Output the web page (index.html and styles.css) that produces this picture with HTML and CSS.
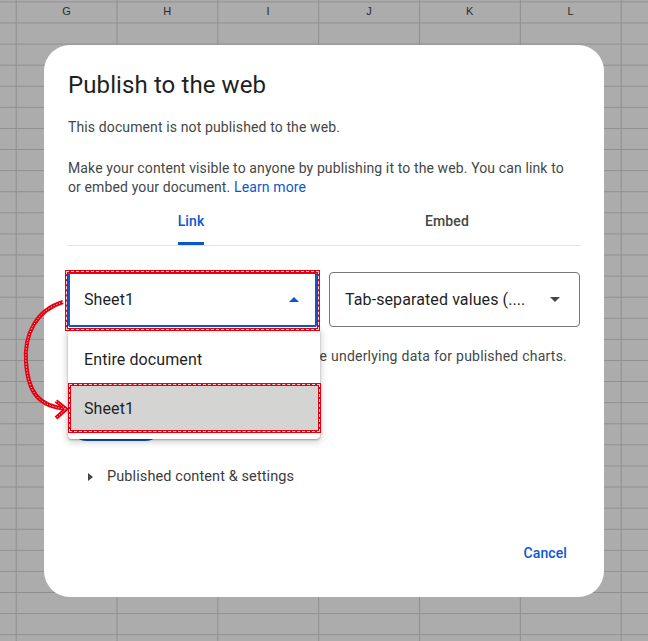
FILE: index.html
```html
<!DOCTYPE html>
<html lang="en">
<head>
<meta charset="utf-8">
<title>Publish to the web</title>
<link rel="stylesheet" href="styles.css">
</head>
<body>
  <div class="col-header">
    <div class="corner"></div>
    <div class="col">G</div>
    <div class="col">H</div>
    <div class="col">I</div>
    <div class="col">J</div>
    <div class="col">K</div>
    <div class="col">L</div>
  </div>

  <div class="dialog">
    <h1 class="title">Publish to the web</h1>
    <p class="status">This document is not published to the web.</p>
    <p class="intro">Make your content visible to anyone by publishing it to the web. You can link to or embed your document. <a class="link" href="#">Learn more</a></p>

    <div class="tabs">
      <div class="tab-list">
        <div class="tab tab-active"><span class="tab-label">Link</span></div>
        <div class="tab"><span class="tab-label">Embed</span></div>
      </div>
    </div>

    <div class="selects">
      <div class="select select-open">
        <span class="select-text">Sheet1</span>
        <svg class="caret" width="10" height="5" viewBox="0 0 10 5"><path d="M0 5 L5 0 L10 5 Z" fill="#0b57d0"/></svg>
        <span class="mark"></span>
        <div class="menu">
          <div class="menu-item menu-item-first">Entire document</div>
          <div class="menu-item menu-item-selected">Sheet1<span class="mark mark-inset"></span></div>
        </div>
      </div>
      <div class="select">
        <span class="select-text">Tab-separated values (....</span>
        <svg class="caret" width="10" height="5" viewBox="0 0 10 5"><path d="M0 0 L5 5 L10 0 Z" fill="#444746"/></svg>
      </div>
    </div>

    <p class="caption">Anyone with the link will also access the underlying data for published charts.</p>

    <button class="publish">Publish</button>

    <div class="disclosure">
      <svg class="disclosure-icon" width="5" height="8" viewBox="0 0 5 8"><path d="M0 0 L5 4 L0 8 Z" fill="#444746"/></svg>
      <span>Published content &amp; settings</span>
    </div>

    <div class="footer">
      <button class="text-btn">Cancel</button>
    </div>
  </div>

  <svg class="annot" width="120" height="450" viewBox="0 0 120 450">
    <g fill="none" stroke-linecap="butt">
      <path d="M63 302 C 36 310 24 335 26 362 C 28 392 38 406 66 409" stroke="#e3000f" stroke-width="4"/>
      <path d="M56 401 L66 409 L56 418" stroke="#e3000f" stroke-width="4"/>
      <path d="M63 302 C 36 310 24 335 26 362 C 28 392 38 406 66 409" stroke="#ffffff" stroke-width="1" stroke-dasharray="1 2"/>
      <path d="M56 401 L66 409 L56 418" stroke="#ffffff" stroke-width="1" stroke-dasharray="1 2"/>
    </g>
  </svg>
</body>
</html>
```

FILE: styles.css
```css
html {
  background-color: #acacac;
  background-image:
    linear-gradient(to right, #8f8f8f 0 1px, transparent 1px),
    linear-gradient(to bottom, #8f8f8f 0 1px, transparent 1px);
  background-size: 100.83px 100%, 100% 21.1px;
  background-position: 15.7px 0, 0 22.5px;
  min-height: 100%;
}

body {
  margin: 0;
  height: 641px;
  overflow: hidden;
  font-family: Roboto, "Noto Sans", Arial, sans-serif;
  color: #1f1f1f;
}

.col-header {
  display: flex;
  height: 22px;
}

.corner {
  width: 16px;
  flex: none;
}

.col {
  width: 100.83px;
  flex: none;
  text-align: center;
  font-family: "Liberation Sans", Arial, sans-serif;
  font-size: 11px;
  line-height: 22px;
  color: #2a2a2a;
}

.dialog {
  margin: 23px 0 0 44px;
  width: 560px;
  height: 552px;
  box-sizing: border-box;
  padding: 25px 24px 24px;
  background: #fff;
  border-radius: 26px;
  display: flex;
  flex-direction: column;
}

.title {
  margin: 0;
  font-size: 24px;
  line-height: 30px;
  font-weight: 400;
  letter-spacing: 0.1px;
  color: #1f1f1f;
}

.status {
  margin: 17px 0 0;
  font-size: 14px;
  line-height: 20px;
  letter-spacing: 0.12px;
  color: #444746;
}

.intro {
  margin: 22px 0 0;
  font-size: 14px;
  line-height: 19px;
  letter-spacing: 0.12px;
  color: #444746;
}

.link {
  color: #0b57d0;
  text-decoration: none;
}

.tabs {
  height: 48px;
  border-bottom: 1px solid #e3e3e3;
}

.tab-list {
  display: flex;
  height: 100%;
  margin-left: -5px;
}

.tab {
  flex: 0 0 256px;
  display: flex;
  justify-content: center;
  align-items: stretch;
}

.tab-label {
  display: flex;
  align-items: center;
  font-size: 14px;
  font-weight: 500;
  letter-spacing: 0.1px;
  color: #444746;
  border-bottom: 3px solid transparent;
  padding-top: 3px;
}

.tab-active .tab-label {
  color: #0b57d0;
  border-bottom-color: #0b57d0;
}

.selects {
  margin-top: 26px;
  display: flex;
  gap: 12px;
}

.select {
  position: relative;
  flex: 1;
  height: 55px;
  box-sizing: border-box;
  border: 1px solid #747775;
  border-radius: 4px;
  display: flex;
  align-items: center;
  justify-content: space-between;
  padding: 0 19px 0 15px;
}

.select-open {
  border: 2px solid #0b57d0;
  border-radius: 2px;
  padding: 0 16px 0 14px;
}

.select-text {
  font-size: 16px;
  letter-spacing: 0.1px;
  color: #1f1f1f;
}

.mark {
  position: absolute;
  left: -5px;
  right: -5px;
  top: -4px;
  bottom: -6px;
  border: 3px solid #e3000f;
  pointer-events: none;
  z-index: 3;
}

.mark::after {
  content: "";
  position: absolute;
  inset: -2px;
  border: 1px dashed rgba(255, 255, 255, 0.85);
}

.mark-inset {
  left: 0;
  right: -1px;
  top: 0;
  bottom: 0;
}

.menu {
  position: absolute;
  left: -2px;
  top: 55px;
  width: 252px;
  padding: 6px 0;
  background: #fff;
  border-radius: 4px;
  box-shadow: 0 1px 2px rgba(0,0,0,.3), 0 2px 6px 2px rgba(0,0,0,.15);
  z-index: 2;
}

.menu-item {
  position: relative;
  height: 50px;
  display: flex;
  align-items: center;
  padding-left: 16px;
  font-size: 16px;
  letter-spacing: 0.1px;
  color: #1f1f1f;
}

.menu-item-first {
  height: 48px;
}

.menu-item-selected {
  background: #d4d5d2;
}

.caption {
  margin: 19px 0 0;
  font-size: 14px;
  line-height: 20px;
  letter-spacing: 0.2px;
  word-spacing: 0.25px;
  color: #444746;
  white-space: nowrap;
}

.publish {
  margin-top: 39px;
  align-self: flex-start;
  height: 36px;
  width: 94px;
  margin-left: 1px;
  border: none;
  border-radius: 18px;
  background: #0b57d0;
  color: #fff;
  font-family: inherit;
  font-size: 14px;
  font-weight: 500;
}

.disclosure {
  margin-top: 26px;
  display: flex;
  align-items: center;
  gap: 14px;
  padding-left: 20px;
  font-size: 14.5px;
  line-height: 20px;
  letter-spacing: 0.1px;
  font-weight: 400;
  color: #3c3c3c;
}

.footer {
  margin-top: auto;
  display: flex;
  justify-content: flex-end;
}

.text-btn {
  height: 40px;
  padding: 0 13px 0 12px;
  border: none;
  background: none;
  color: #0b57d0;
  font-family: inherit;
  font-size: 14px;
  font-weight: 500;
  letter-spacing: 0.1px;
}

.annot {
  position: absolute;
  left: 0;
  top: 0;
  pointer-events: none;
  z-index: 5;
}
```
